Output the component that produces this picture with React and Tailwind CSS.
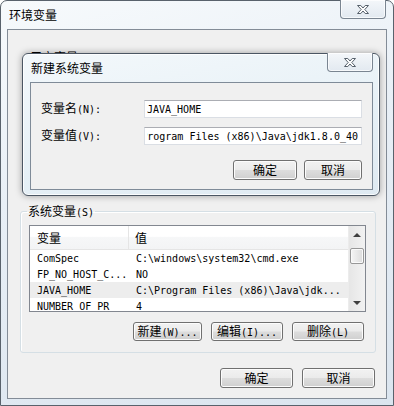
import React from 'react'

const rows = [
  { name: 'ComSpec', value: 'C:\\windows\\system32\\cmd.exe' },
  { name: 'FP_NO_HOST_C...', value: 'NO' },
  { name: 'JAVA_HOME', value: 'C:\\Program Files (x86)\\Java\\jdk...', selected: true },
  { name: 'NUMBER_OF_PR', value: '4' },
]

// CJK part at 12px, latin part in a 6px-per-char mono, like SimSun 9pt
function Lbl({ zh, en }) {
  return (
    <span className="inline-flex items-baseline whitespace-nowrap text-black">
      <span className="font-['Noto_Sans_CJK_SC',sans-serif] text-[12px] leading-[14px]">{zh}</span>
      {en && <span className="font-['DejaVu_Sans_Mono',monospace] text-[10px] leading-[14px]">{en}</span>}
    </span>
  )
}

function CloseGlyph() {
  return (
    <svg width="14" height="11" viewBox="0 0 14 11">
      <path
        d="M1.5 1.5 H4.8 L7 4 L9.2 1.5 H12.5 L8.8 5.5 L12.5 9.5 H9.2 L7 7 L4.8 9.5 H1.5 L5.2 5.5 Z"
        fill="#fdfdfd"
        stroke="#56606b"
        strokeWidth="1"
        strokeLinejoin="round"
      />
    </svg>
  )
}

function CloseBtn() {
  return (
    <div className="-mt-[1px] flex h-[19px] w-[46px] items-center justify-center rounded-b-[4px] border border-t-0 border-[#7a8591] bg-[linear-gradient(#f4f7fa,#e2e9f0)] shadow-[inset_0_0_0_1px_rgba(255,255,255,0.7)]">
      <CloseGlyph />
    </div>
  )
}

function Btn({ children, className = '' }) {
  return (
    <div className={`flex items-center justify-center rounded-[3px] border border-[#707070] bg-[linear-gradient(#f2f2f2_0%,#ebebeb_48%,#dddddd_52%,#cfcfcf_100%)] shadow-[inset_0_0_0_1px_#fcfcfc] ${className}`}>
      {children}
    </div>
  )
}

function Group({ label, children, className = '' }) {
  return (
    <fieldset className={`rounded-[3px] border border-[#d5dfe5] shadow-[inset_1px_1px_0_#fff] ${className}`}>
      <legend className="ml-[6px] flex h-[14px] px-[1px] text-[12px] leading-[14px]">
        <Lbl zh={label.zh} en={label.en} />
      </legend>
      {children}
    </fieldset>
  )
}

function ScrollBar() {
  return (
    <div className="flex w-[17px] flex-col border-l border-[#ececec] bg-[linear-gradient(90deg,#e6e6e6,#f2f2f2)]">
      <div className="flex h-[17px] items-center justify-center">
        <div className="h-0 w-0 border-x-[4px] border-b-[4px] border-x-transparent border-b-[#404040]" />
      </div>
      <div className="flex-1">
        <div className="ml-[1px] mt-[5px] h-[16px] w-[14px] rounded-[2px] border border-[#979797] bg-[linear-gradient(90deg,#f5f5f5,#dcdcdc)] shadow-[inset_0_0_0_1px_#fafafa]" />
      </div>
      <div className="flex h-[17px] items-center justify-center">
        <div className="h-0 w-0 border-x-[4px] border-t-[4px] border-x-transparent border-t-[#404040]" />
      </div>
    </div>
  )
}

function VarList() {
  return (
    <div className="flex h-[87px] border border-[#828790] bg-white">
      <div className="flex-1 overflow-hidden">
        <div className="flex h-[24px] border-b border-[#e5e5e5] bg-[linear-gradient(#ffffff_0%,#ffffff_45%,#f6f7f8_50%,#f3f4f5_100%)]">
          <div className="flex w-[99px] items-center border-r border-[#e5e5e5] pl-[7px]">
            <Lbl zh="变量" />
          </div>
          <div className="flex items-center pl-[6px]">
            <Lbl zh="值" />
          </div>
        </div>
        {rows.map((r) => (
          <div
            key={r.name}
            className={`flex h-[16px] items-center font-['DejaVu_Sans_Mono',monospace] text-[10px] text-black ${r.selected ? 'bg-[#ededed]' : ''}`}
          >
            <div className="w-[100px] whitespace-nowrap pl-[7px]">{r.name}</div>
            <div className="whitespace-nowrap pl-[6px]">{r.value}</div>
          </div>
        ))}
      </div>
      <ScrollBar />
    </div>
  )
}

function Field({ label, en, value, alignEnd }) {
  return (
    <div className="flex items-center justify-between">
      <Lbl zh={label} en={en} />
      <div className="flex h-[18px] w-[218px] items-center border border-[#dadee4] border-t-[#abadb3] bg-white pl-[2px] pr-[3px]">
        <div
          className={`flex flex-1 overflow-hidden whitespace-nowrap font-['DejaVu_Sans_Mono',monospace] text-[10px] text-black ${alignEnd ? 'justify-end' : ''}`}
        >
          <span className="shrink-0">{value}</span>
        </div>
      </div>
    </div>
  )
}

function NewVarDialog() {
  return (
    <div className="absolute left-[22px] top-[53px] flex h-[143px] w-[358px] flex-col rounded-[6px] border border-[#4b5663] bg-[linear-gradient(170deg,#f3f8fb_0%,#e6f0f6_60%,#dfeaf2_100%)] pb-[5px] pl-[7px] pr-[6px] shadow-[inset_0_0_0_1px_rgba(255,255,255,0.85),0_0_7px_rgba(0,0,0,0.35)]">
      <div className="flex h-[28px] items-start justify-between">
        <div className="pl-[1px] pt-[7px] font-['Noto_Sans_CJK_SC',sans-serif] text-[12px] leading-[14px] text-black">
          新建系统变量
        </div>
        <CloseBtn />
      </div>
      <div className="flex flex-1 flex-col border border-[#7f8b98] bg-[#f0f0f0] px-[10px] pt-[17px]">
        <Field label="变量名" en="(N):" value="JAVA_HOME" />
        <div className="mt-[9px]">
          <Field label="变量值" en="(V):" value={'C:\\Program Files (x86)\\Java\\jdk1.8.0_40'} alignEnd />
        </div>
        <div className="mt-[15px] flex justify-end gap-[7px]">
          <Btn className="h-[20px] w-[64px]"><Lbl zh="确定" /></Btn>
          <Btn className="h-[20px] w-[58px]"><Lbl zh="取消" /></Btn>
        </div>
      </div>
    </div>
  )
}

export default function App() {
  return (
    <div className="relative h-[406px] w-[394px] overflow-hidden bg-white">
      <div className="flex h-full flex-col rounded-t-[7px] border border-[#59626c] bg-[linear-gradient(165deg,#f7fafc_0%,#e8eff6_40%,#dbe5ef_100%)] px-[6px] pb-[6px]">
        <div className="flex h-[28px] items-start justify-between">
          <div className="pl-[2px] pt-[7px] font-['Noto_Sans_CJK_SC',sans-serif] text-[12px] leading-[14px] text-black">
            环境变量
          </div>
          <div className="mr-[1px]">
            <CloseBtn />
          </div>
        </div>

        <div className="flex flex-1 flex-col border border-[#838c97] bg-[#f0f0f0] pl-[12px] pr-[10px]">
          <Group label={{ zh: '用户变量', en: '(U)' }} className="ml-[2px] mt-[20px] h-[144px]">
            <div />
          </Group>

          <Group label={{ zh: '系统变量', en: '(S)' }} className="mt-[10px]">
            <div className="pb-[11px] pl-[8px] pr-[9px] pt-[7px]">
              <VarList />
              <div className="mt-[10px] flex justify-end gap-[9px] pr-[2px]">
                <Btn className="h-[19px] w-[69px]"><Lbl zh="新建" en="(W)..." /></Btn>
                <Btn className="h-[19px] w-[72px]"><Lbl zh="编辑" en="(I)..." /></Btn>
                <Btn className="h-[19px] w-[72px]"><Lbl zh="删除" en="(L)" /></Btn>
              </div>
            </div>
          </Group>

          <div className="mr-[1px] mt-[15px] flex justify-end gap-[9px]">
            <Btn className="h-[20px] w-[73px]"><Lbl zh="确定" /></Btn>
            <Btn className="h-[20px] w-[73px]"><Lbl zh="取消" /></Btn>
          </div>
        </div>
      </div>

      <NewVarDialog />
    </div>
  )
}
